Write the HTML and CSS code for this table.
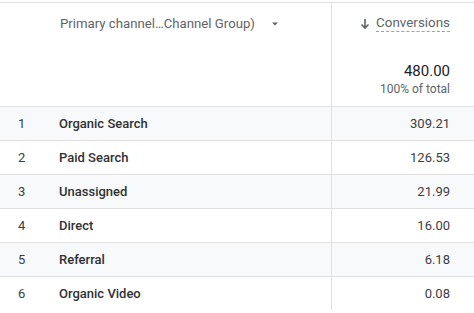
FILE: index.html
```html
<!DOCTYPE html>
<html>
<head>
<meta charset="utf-8">
<link rel="stylesheet" href="styles.css">
</head>
<body>
<div class="table">
  <div class="row head">
    <div class="cell dim">
      <span class="dim-label">Primary channel…Channel Group)</span>
      <svg class="caret" width="10" height="10" viewBox="0 0 10 10"><path d="M2 3.5h6L5 6.5z" fill="#5f6368"/></svg>
    </div>
    <div class="cell metric">
      <div class="metric-title">
        <svg class="arrow" width="12" height="14" viewBox="0 0 12 14"><path d="M6 2v9M2.5 7.5L6 11l3.5-3.5" stroke="#5f6368" stroke-width="1.6" fill="none"/></svg>
        <span class="metric-name">Conversions</span>
      </div>
      <div class="total">480.00</div>
      <div class="pct">100% of total</div>
    </div>
  </div>
  <div class="row alt">
    <div class="cell dim"><span class="idx">1</span><span class="name">Organic Search</span></div>
    <div class="cell val">309.21</div>
  </div>
  <div class="row">
    <div class="cell dim"><span class="idx">2</span><span class="name">Paid Search</span></div>
    <div class="cell val">126.53</div>
  </div>
  <div class="row alt">
    <div class="cell dim"><span class="idx">3</span><span class="name">Unassigned</span></div>
    <div class="cell val">21.99</div>
  </div>
  <div class="row">
    <div class="cell dim"><span class="idx">4</span><span class="name">Direct</span></div>
    <div class="cell val">16.00</div>
  </div>
  <div class="row alt">
    <div class="cell dim"><span class="idx">5</span><span class="name">Referral</span></div>
    <div class="cell val">6.18</div>
  </div>
  <div class="row last">
    <div class="cell dim"><span class="idx">6</span><span class="name">Organic Video</span></div>
    <div class="cell val">0.08</div>
  </div>
</div>
</body>
</html>
```
FILE: styles.css
```css
html, body {
  margin: 0;
  padding: 0;
  background: #fff;
}
body {
  padding-top: 2px;
  font-family: Roboto, "Liberation Sans", sans-serif;
  color: #202124;
}
.table {
  width: 474px;
  border-top: 1px solid #e0e0e0;
}
.row {
  display: grid;
  grid-template-columns: 332px 142px;
  border-bottom: 1px solid #e0e0e0;
  height: 33px;
}
.row.head {
  height: 103px;
}
.row.last {
  border-bottom: none;
}
.row.alt {
  background: #f8f9fa;
}
.cell {
  border-right: 1px solid #e0e0e0;
}
.cell:last-child {
  border-right: none;
}
.dim {
  display: flex;
  align-items: center;
}
.head .dim {
  align-items: flex-start;
  padding-left: 60px;
  padding-top: 13px;
  font-size: 13.2px;
  color: #5f6368;
  gap: 15px;
}
.caret {
  margin-top: 3px;
}
.idx {
  width: 59px;
  padding-left: 18px;
  box-sizing: border-box;
  font-size: 13px;
  color: #3c4043;
}
.name {
  font-size: 13px;
  font-weight: 500;
  color: #303134;
}
.metric {
  display: flex;
  flex-direction: column;
  align-items: flex-end;
  padding-right: 24px;
  padding-top: 12px;
}
.metric-title {
  display: flex;
  align-items: center;
  gap: 5px;
  font-size: 13.4px;
  color: #5f6368;
}
.metric-name {
  border-bottom: 1px dashed #9aa0a6;
  line-height: 16px;
}
.total {
  margin-top: 30px;
  font-size: 15px;
  color: #202124;
}
.pct {
  margin-top: 2px;
  font-size: 12px;
  color: #5f6368;
}
.val {
  display: flex;
  align-items: center;
  justify-content: flex-end;
  padding-right: 24px;
  font-size: 13px;
  color: #3c4043;
}
```
